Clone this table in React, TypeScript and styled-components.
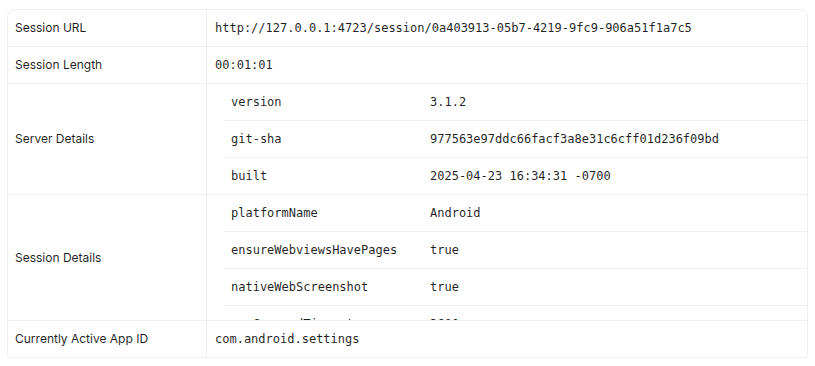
import React from "react";
import styled, { createGlobalStyle } from "styled-components";

const Global = createGlobalStyle`
  html, body { margin: 0; padding: 0; background: #ffffff; }
  body { font-family: Inter, "Noto Sans", sans-serif; color: rgba(0,0,0,0.88); }
`;

const Page = styled.div`
  padding: 9px 0 0 7px;
`;

const Table = styled.div`
  width: 801px;
  box-sizing: border-box;
  border: 1px solid #f0f0f0;
  border-radius: 8px 8px 0 0;
  font-size: 12px;
  line-height: 20px;
`;

const Row = styled.div`
  display: grid;
  grid-template-columns: 199px 1fr;
  border-bottom: 1px solid #f0f0f0;
  &:last-child { border-bottom: none; }
`;

const Label = styled.div`
  display: flex;
  align-items: center;
  padding: 8px 8px 8px 7px;
  border-right: 1px solid #f0f0f0;
  font-family: Inter, "Noto Sans", sans-serif;
  font-size: 12px;
`;

const Value = styled.div<{ $nested?: boolean }>`
  padding: ${(p) => (p.$nested ? "0 0 0 16px" : "8px")};
  font-family: "DejaVu Sans Mono", "Liberation Mono", monospace;
  font-size: 12px;
  min-width: 0;
`;

const Scroll = styled.div<{ $maxHeight?: number }>`
  max-height: ${(p) => (p.$maxHeight ? `${p.$maxHeight}px` : "none")};
  overflow-y: auto;
  scrollbar-width: none;
  &::-webkit-scrollbar { display: none; }
`;

const InnerRow = styled.div<{ $last?: boolean }>`
  display: grid;
  grid-template-columns: 199px 1fr;
  border-bottom: ${(p) => (p.$last ? "none" : "1px solid #f0f0f0")};
`;

const InnerCell = styled.div`
  padding: 8px;
  font-family: "DejaVu Sans Mono", "Liberation Mono", monospace;
  font-size: 12px;
  line-height: 20px;
  white-space: nowrap;
`;

type Pair = [string, string];

const server: Pair[] = [
  ["version", "3.1.2"],
  ["git-sha", "977563e97ddc66facf3a8e31c6cff01d236f09bd"],
  ["built", "2025-04-23 16:34:31 -0700"],
];

const session: Pair[] = [
  ["platformName", "Android"],
  ["ensureWebviewsHavePages", "true"],
  ["nativeWebScreenshot", "true"],
  ["newCommandTimeout", "3600"],
];

function Nested({ rows, maxHeight }: { rows: Pair[]; maxHeight?: number }) {
  return (
    <Scroll $maxHeight={maxHeight}>
      {rows.map(([k, v], i) => (
        <InnerRow key={k} $last={i === rows.length - 1}>
          <InnerCell>{k}</InnerCell>
          <InnerCell>{v}</InnerCell>
        </InnerRow>
      ))}
    </Scroll>
  );
}

export default function App() {
  return (
    <>
      <Global />
      <Page>
        <Table>
          <Row>
            <Label>Session URL</Label>
            <Value>http://127.0.0.1:4723/session/0a403913-05b7-4219-9fc9-906a51f1a7c5</Value>
          </Row>
          <Row>
            <Label>Session Length</Label>
            <Value>00:01:01</Value>
          </Row>
          <Row>
            <Label>Server Details</Label>
            <Value $nested>
              <Nested rows={server} />
            </Value>
          </Row>
          <Row>
            <Label>Session Details</Label>
            <Value $nested>
              <Nested rows={session} maxHeight={125} />
            </Value>
          </Row>
          <Row>
            <Label>Currently Active App ID</Label>
            <Value>com.android.settings</Value>
          </Row>
        </Table>
      </Page>
    </>
  );
}
